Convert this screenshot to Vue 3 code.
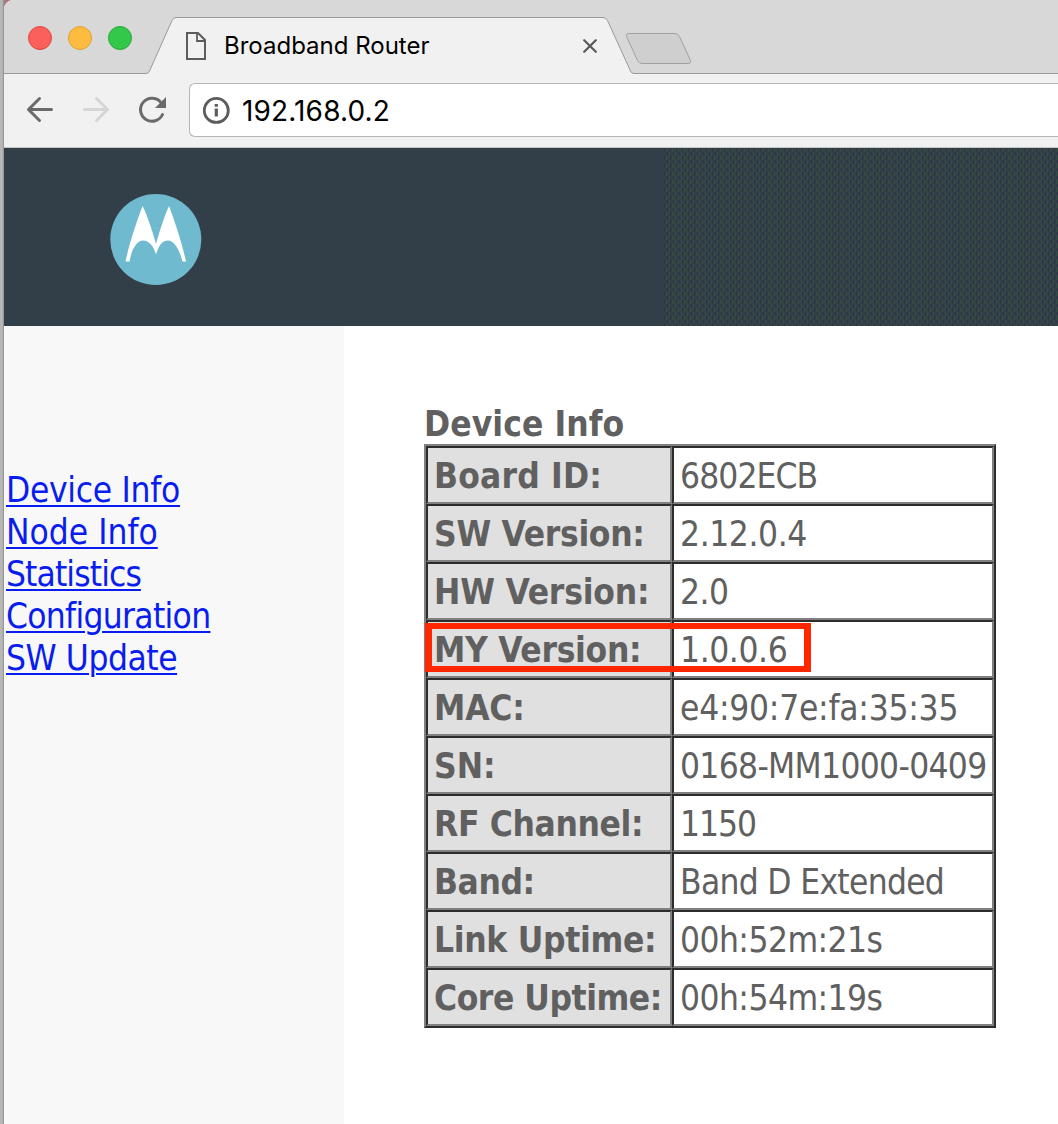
<script setup>
const links = [
  { text: 'Device Info', spacing: '-0.3px' },
  { text: 'Node Info', spacing: '0px' },
  { text: 'Statistics', spacing: '-0.9px' },
  { text: 'Configuration', spacing: '-0.7px' },
  { text: 'SW Update', spacing: '-0.45px' },
]
const rows = [
  { label: 'Board ID:', value: '6802ECB', ls: '0.2px', vs: '-0.9px' },
  { label: 'SW Version:', value: '2.12.0.4', ls: '-0.3px', vs: '-0.4px' },
  { label: 'HW Version:', value: '2.0', ls: '-0.2px', vs: '-0.5px' },
  { label: 'MY Version:', value: '1.0.0.6', ls: '-0.3px', vs: '-0.4px', marked: true },
  { label: 'MAC:', value: 'e4:90:7e:fa:35:35', ls: '-0.2px', vs: '-0.25px' },
  { label: 'SN:', value: '0168-MM1000-0409', ls: '0px', vs: '-0.68px' },
  { label: 'RF Channel:', value: '1150', ls: '-0.35px', vs: '-1px' },
  { label: 'Band:', value: 'Band D Extended', ls: '-0.4px', vs: '-0.7px' },
  { label: 'Link Uptime:', value: '00h:52m:21s', ls: '-0.3px', vs: '-0.55px' },
  { label: 'Core Uptime:', value: '00h:54m:19s', ls: '-0.45px', vs: '-0.55px' },
]
</script>

<template>
  <div class="screen">
    <div class="edge"></div>
    <div class="window">
      <header class="tabs">
        <svg class="tab-shape" width="1054" height="74" viewBox="4 0 1054 74">
          <path d="M4 73.5H146Q148.500 73.500 149.500 71L172 20.500Q173.500 17.500 176 17.500H603Q606 17.500 607.500 20.500L630.500 71Q631.500 73.500 634 73.500H1058V75H4Z" fill="#f1f1f1" />
          <path d="M4 73.500H146Q148.500 73.500 149.500 71L172 20.500Q173.500 17.500 176 17.500H603Q606 17.500 607.500 20.500L630.500 71Q631.500 73.500 634 73.500H1058" fill="none" stroke="#999" />
          <path d="M629 33.500H675Q678 33.500 679.500 36.500L690 59.500Q692 63.500 688 63.500H642Q639 63.500 637.500 60.500L627 37.500Q625 33.500 629 33.500Z" fill="#cfcfcf" stroke="#a0a0a0" />
        </svg>
        <i class="light red"></i><i class="light amber"></i><i class="light green"></i>
        <svg class="page-icon" width="20" height="28" viewBox="0 0 20 28" fill="none" stroke="#5c5c5c" stroke-width="2">
          <path d="M1 1H12L19 8V27H1Z" /><path d="M11 1V9H19" stroke-width="1.800" />
        </svg>
        <span class="tab-title">Broadband Router</span>
        <svg class="close" width="14" height="14" viewBox="0 0 14 14" stroke="#5a5a5a" stroke-width="2.200" stroke-linecap="round">
          <path d="M1.200 1.200L12.800 12.800M12.800 1.200L1.200 12.800" />
        </svg>
      </header>
      <div class="toolbar">
        <svg width="185" height="73" viewBox="4 74 185 73" fill="none" stroke="#6a6a6a" stroke-width="3" stroke-linecap="round" stroke-linejoin="round">
          <path d="M51.500 109.500H28.500M39.500 98.500L28.500 109.500L39.500 120.500" />
          <path d="M84.500 109.500H107.500M96.500 98.500L107.500 109.500L96.500 120.500" stroke="#d6d6d6" />
          <path d="M160.500 102A11.500 11.500 0 1 0 162.500 114.500" stroke-linecap="round" />
          <path d="M166 97V108H155Z" fill="#6a6a6a" stroke="none" />
        </svg>
        <div class="address">
          <svg width="28" height="28" viewBox="0 0 28 28">
            <circle cx="14.300" cy="14.400" r="12" fill="none" stroke="#5c5c5c" stroke-width="2.800" />
            <path d="M12.700 7.900h3.200v2.800h-3.200zM12.700 12.600h3.200v8h-3.200z" fill="#5c5c5c" />
          </svg>
          <span class="url">192.168.0.2</span>
        </div>
      </div>
      <div class="banner">
        <svg width="1054" height="178" viewBox="4 148 1054 178">
          <defs>
            <pattern id="dither" width="6" height="8" patternUnits="userSpaceOnUse">
              <path d="M1 0h1v3h-1zM4 4h1v3h-1z" fill="#332f50" />
              <path d="M3 0h1v4h-1zM0 4h1v4h-1zM2 5h1v2h-1z" fill="#355039" />
            </pattern>
          </defs>
          <rect x="664" y="148" width="394" height="178" fill="url(#dither)" />
          <circle cx="155.800" cy="239.500" r="45.500" fill="#70bad0" />
          <path d="M142.500 206C148 217 153 233 156 244C159 233 164 217 169 206C175 222 182 243 186 261.500H182.500C179.500 250 174.500 240.500 168 240.500C162 240.500 158.500 246 156 254.500C153.500 246 149 240.500 143 240.500C136.500 240.500 131.500 250 129.500 261.500H125.500C129.500 243 136.500 222 142.500 206Z" fill="#fff" />
        </svg>
      </div>
      <div class="body">
        <nav>
          <div v-for="l in links" :key="l.text"><a :style="{ letterSpacing: l.spacing }">{{ l.text }}</a></div>
        </nav>
        <main>
          <h1>Device Info</h1>
          <div class="table">
            <div v-for="r in rows" :key="r.label" class="row">
              <div class="label"><span :style="{ letterSpacing: r.ls }">{{ r.label }}</span></div>
              <div class="value"><span :style="{ letterSpacing: r.vs }">{{ r.value }}</span></div>
              <div v-if="r.marked" class="mark"></div>
            </div>
          </div>
        </main>
      </div>
    </div>
  </div>
</template>

<style>
body { margin: 0; overflow: hidden; }
</style>

<style scoped>
.screen { display: flex; width: 1058px; height: 1124px; overflow: hidden; background: #a87a7f; }
.edge { width: 4px; background: linear-gradient(90deg, #b9b9b9, #b4b4b4 60%, #888); }
.window { width: 1054px; background: #fff; display: flex; flex-direction: column; border-top-left-radius: 9px; overflow: hidden; }
.tabs { position: relative; height: 74px; background: #d8d8d8; display: flex; box-sizing: border-box; padding-left: 24px; flex: none; }
.tab-shape { position: absolute; left: 0; top: 0; }
.light { position: relative; width: 24px; height: 24px; border-radius: 50%; box-sizing: border-box; margin: 26px 16px 0 0; border: 1px solid; }
.red { background: #fc605c; border-color: #e2463f; }
.amber { background: #fdbc40; border-color: #dfa032; }
.green { background: #34c84a; border-color: #27aa35; }
.page-icon { position: relative; margin: 32px 0 0 38px; }
.tab-title { position: relative; margin: 30px 0 0 18px; width: 359px; font: 24px/32px Inter, sans-serif; color: #000; white-space: nowrap; }
.close { position: relative; margin-top: 39px; }
.toolbar { height: 73px; background: #f1f1f1; border-bottom: 1px solid #c4c6c8; display: flex; flex: none; }
.address { flex: 1; height: 52px; margin-top: 9px; border: 1px solid #b5b5b5; border-right: 0; border-radius: 6px 0 0 6px; background: #fff; display: flex; align-items: center; padding-left: 12px; }
.url { font: 28px/40px Inter, sans-serif; letter-spacing: 0.15px; margin-left: 12px; padding-top: 2px; color: #000; }
.banner { height: 178px; background: #333f48; flex: none; }
.banner svg { display: block; }
.body { display: flex; flex: 1; font-family: 'DejaVu Sans Condensed', 'DejaVu Sans', sans-serif; font-stretch: condensed; font-size: 35px; white-space: nowrap; }
nav { width: 338px; padding: 143px 0 0 2px; background: #f8f8f8; line-height: 42px; }
nav a { color: #0a1df0; text-decoration: underline; text-decoration-thickness: 2px; text-underline-offset: 3px; }
main { padding: 77px 0 0 80px; color: #606060; }
h1 { margin: 0; height: 41px; font-size: 35px; line-height: 42px; font-weight: bold; letter-spacing: 0.1px; }
.table { width: 568px; border: 2px solid; border-color: #808080 #2c2c2c #2c2c2c #808080; }
.row { position: relative; display: flex; height: 58px; }
.label, .value { box-sizing: border-box; border: 2px solid; border-color: #2c2c2c #808080 #808080 #2c2c2c; padding-left: 6px; line-height: 56px; }
.label { width: 246px; background: #e0e0e0; font-weight: bold; }
.value { width: 322px; }
.mark { position: absolute; left: -1px; top: 3px; width: 372px; height: 37px; border: solid #ff2600; border-width: 6px 7px; }
</style>
